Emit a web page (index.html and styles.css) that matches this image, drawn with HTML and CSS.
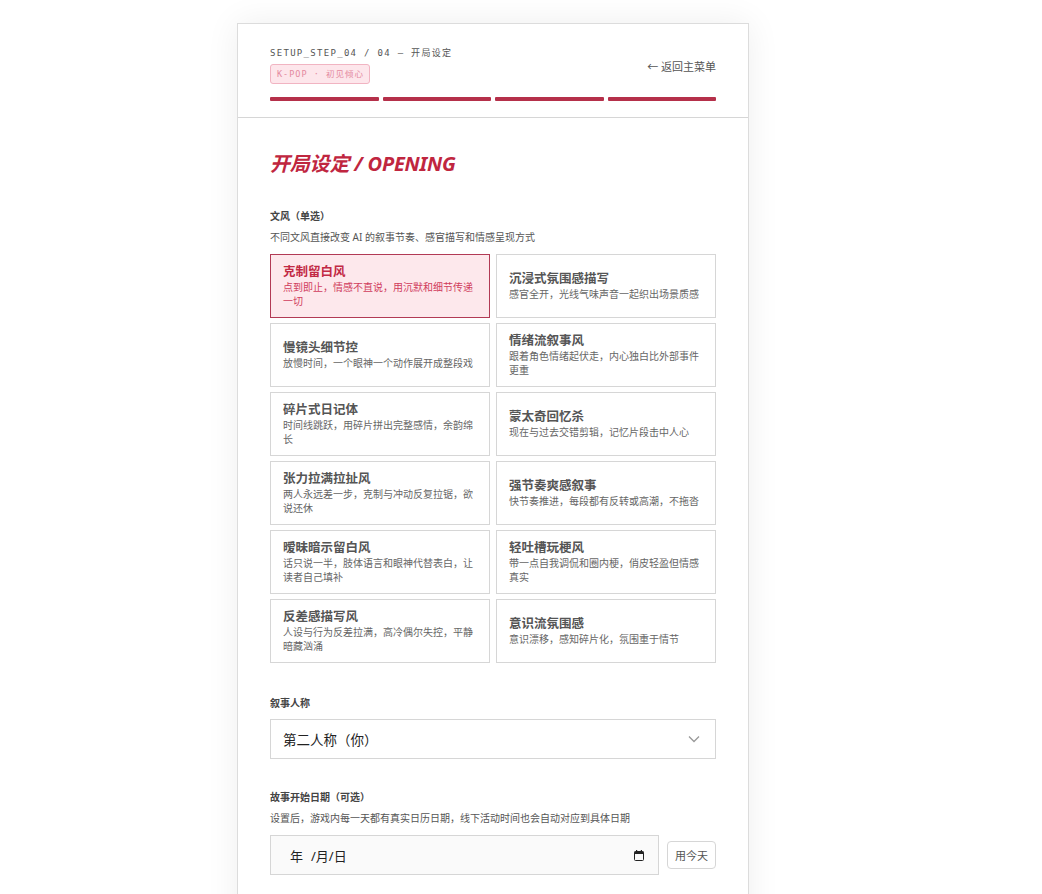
FILE: index.html
```html
<!DOCTYPE html>
<html lang="zh-CN">
<head>
  <meta charset="UTF-8" />
  <meta name="viewport" content="width=device-width, initial-scale=1" />
  <title>开局设定 / OPENING</title>
  <link rel="stylesheet" href="styles.css">
</head>
<body>
  <div class="shell">
    <header class="setup-head">
      <div class="head-row">
        <div class="head-meta">
          <div class="step">SETUP_STEP_04 / 04 — 开局设定</div>
          <span class="tag">K-POP · 初见倾心</span>
        </div>
        <a class="back" href="#">← 返回主菜单</a>
      </div>
      <div class="progress">
        <span></span><span></span><span></span><span></span>
      </div>
    </header>

    <main class="setup-body">
      <h1 class="title">开局设定 / OPENING</h1>

      <section class="field">
        <div class="field-label">文风（单选）</div>
        <div class="field-hint">不同文风直接改变 AI 的叙事节奏、感官描写和情感呈现方式</div>
        <div class="style-grid">
          <div class="style-opt is-active">
            <div class="opt-name">克制留白风</div>
            <div class="opt-desc">点到即止，情感不直说，用沉默和细节传递一切</div>
          </div>
          <div class="style-opt">
            <div class="opt-name">沉浸式氛围感描写</div>
            <div class="opt-desc">感官全开，光线气味声音一起织出场景质感</div>
          </div>
          <div class="style-opt">
            <div class="opt-name">慢镜头细节控</div>
            <div class="opt-desc">放慢时间，一个眼神一个动作展开成整段戏</div>
          </div>
          <div class="style-opt">
            <div class="opt-name">情绪流叙事风</div>
            <div class="opt-desc">跟着角色情绪起伏走，内心独白比外部事件更重</div>
          </div>
          <div class="style-opt">
            <div class="opt-name">碎片式日记体</div>
            <div class="opt-desc">时间线跳跃，用碎片拼出完整感情，余韵绵长</div>
          </div>
          <div class="style-opt">
            <div class="opt-name">蒙太奇回忆杀</div>
            <div class="opt-desc">现在与过去交错剪辑，记忆片段击中人心</div>
          </div>
          <div class="style-opt">
            <div class="opt-name">张力拉满拉扯风</div>
            <div class="opt-desc">两人永远差一步，克制与冲动反复拉锯，欲说还休</div>
          </div>
          <div class="style-opt">
            <div class="opt-name">强节奏爽感叙事</div>
            <div class="opt-desc">快节奏推进，每段都有反转或高潮，不拖沓</div>
          </div>
          <div class="style-opt">
            <div class="opt-name">暧昧暗示留白风</div>
            <div class="opt-desc">话只说一半，肢体语言和眼神代替表白，让读者自己填补</div>
          </div>
          <div class="style-opt">
            <div class="opt-name">轻吐槽玩梗风</div>
            <div class="opt-desc">带一点自我调侃和圈内梗，俏皮轻盈但情感真实</div>
          </div>
          <div class="style-opt">
            <div class="opt-name">反差感描写风</div>
            <div class="opt-desc">人设与行为反差拉满，高冷偶尔失控，平静暗藏汹涌</div>
          </div>
          <div class="style-opt">
            <div class="opt-name">意识流氛围感</div>
            <div class="opt-desc">意识漂移，感知碎片化，氛围重于情节</div>
          </div>
        </div>
      </section>

      <section class="field field-person">
        <div class="field-label">叙事人称</div>
        <div class="select">
          <span>第二人称（你）</span>
          <svg class="chev" width="12" height="8" viewBox="0 0 12 8"><path d="M1 1.5 6 6.5 11 1.5" fill="none" stroke="#999" stroke-width="1.3"/></svg>
        </div>
      </section>

      <section class="field">
        <div class="field-label">故事开始日期（可选）</div>
        <div class="field-hint">设置后，游戏内每一天都有真实日历日期，线下活动时间也会自动对应到具体日期</div>
        <div class="date-row">
          <div class="date-input">
            <span class="date-text"><span class="seg">年</span>/月/日</span>
            <svg class="cal" width="10" height="11" viewBox="0 0 10 11"><rect x="0.5" y="1.5" width="9" height="9" rx="1" fill="none" stroke="#222"/><rect x="0.5" y="1.5" width="9" height="2.5" fill="#222"/><rect x="2" y="0" width="1.2" height="2" fill="#222"/><rect x="6.8" y="0" width="1.2" height="2" fill="#222"/></svg>
          </div>
          <button class="today-btn" type="button">用今天</button>
        </div>
      </section>
    </main>
  </div>
</body>
</html>
```

FILE: styles.css
```css
* {
  margin: 0;
  padding: 0;
  box-sizing: border-box;
}
body {
  font-family: 'Noto Sans', 'Noto Sans CJK SC', sans-serif;
  background: #fff;
  color: #444;
}
.shell {
  width: 512px;
  margin: 23px 0 0 237px;
  background: #fff;
  border: 1px solid #dcdcdc;
  box-shadow: 0 0 32px rgba(0,0,0,0.07);
  min-height: 900px;
}
.setup-head {
  padding: 23px 32px 16px;
  border-bottom: 1px solid #d6d6d6;
}
.head-row {
  display: flex;
  align-items: center;
  justify-content: space-between;
}
.head-meta {
  display: flex;
  flex-direction: column;
  align-items: flex-start;
  gap: 4px;
}
.step {
  font-family: 'DejaVu Sans Mono', 'Noto Sans CJK SC', monospace;
  font-size: 9px;
  letter-spacing: 1.3px;
  line-height: 13px;
  color: #555;
}
.tag {
  font-family: 'DejaVu Sans Mono', 'Noto Sans CJK SC', monospace;
  font-size: 8.5px;
  letter-spacing: 1px;
  line-height: 18px;
  padding: 0 5px 0 6px;
  color: #e4899f;
  background: #fde6eb;
  border: 1px solid #f1b4c2;
  border-radius: 3px;
}
.back {
  font-size: 11px;
  color: #555;
  text-decoration: none;
}
.progress {
  display: flex;
  gap: 4px;
  margin-top: 13px;
}
.progress span {
  flex: 1;
  height: 4px;
  background: #b5304a;
  border-radius: 1px;
}
.setup-body {
  padding: 32px 32px 40px;
}
.title {
  font-size: 20px;
  line-height: 28px;
  font-weight: 700;
  font-style: italic;
  letter-spacing: -0.2px;
  color: #c0263f;
  margin-bottom: 31px;
}
.field {
  margin-bottom: 33px;
}
.field-person {
  margin-bottom: 31px;
}
.field-label {
  font-size: 10px;
  line-height: 14px;
  font-weight: 700;
  color: #444;
  margin-bottom: 7px;
}
.field-hint {
  font-size: 10px;
  line-height: 14px;
  color: #555;
  margin-bottom: 10px;
}
.style-grid {
  display: grid;
  grid-template-columns: 1fr 1fr;
  column-gap: 6px;
  row-gap: 5px;
}
.style-opt {
  display: flex;
  flex-direction: column;
  justify-content: center;
  padding: 7.5px 12px 8.5px;
  border: 1px solid #d6d6d6;
  background: #fff;
}
.opt-name {
  font-size: 12.5px;
  line-height: 17px;
  font-weight: 700;
  color: #555;
}
.opt-desc {
  font-size: 10px;
  line-height: 14.5px;
  color: #666;
}
.style-opt.is-active {
  background: #fde8ec;
  border-color: #b23a55;
}
.style-opt.is-active .opt-name {
  color: #c22a45;
}
.style-opt.is-active .opt-desc {
  color: #d03c5c;
}
.select {
  display: flex;
  align-items: center;
  justify-content: space-between;
  height: 40px;
  margin-top: 9px;
  padding: 0 15px 0 12px;
  border: 1px solid #d6d6d6;
  font-size: 13.5px;
  color: #222;
}
.date-row {
  display: flex;
  align-items: center;
  gap: 8px;
}
.date-input {
  flex: 1;
  display: flex;
  align-items: center;
  justify-content: space-between;
  height: 40px;
  padding: 0 14px 0 19px;
  background: #fafafa;
  border: 1px solid #d6d6d6;
  font-size: 13px;
  color: #222;
}
.seg {
  margin-right: 8px;
}
.today-btn {
  font-family: inherit;
  font-size: 11px;
  color: #555;
  background: #fff;
  border: 1px solid #d6d6d6;
  border-radius: 4px;
  height: 28px;
  padding: 0 7px;
}
```
